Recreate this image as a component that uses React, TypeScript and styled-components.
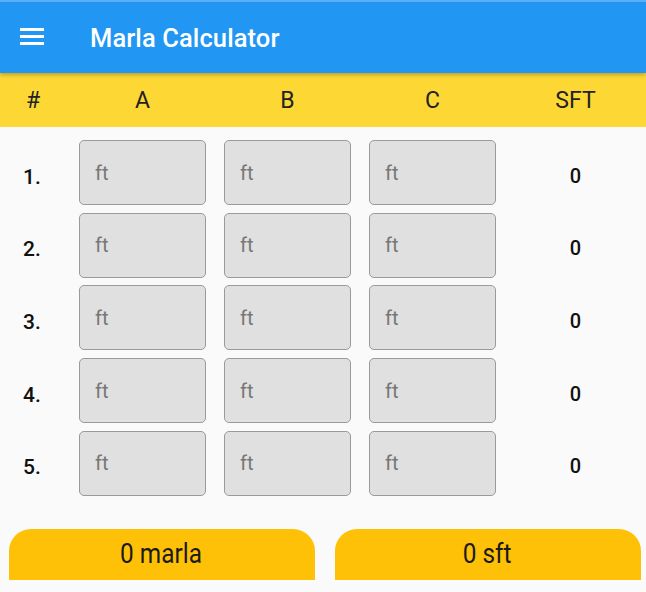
import styled, { createGlobalStyle } from 'styled-components';

const GlobalStyle = createGlobalStyle`
  html, body {
    margin: 0;
    padding: 0;
    background: #fafafa;
    font-family: Roboto, 'Noto Sans', sans-serif;
  }
`;

const Page = styled.div`
  width: 646px;
  height: 592px;
  display: flex;
  flex-direction: column;
  background: #fafafa;
  overflow: hidden;
`;

const AppBar = styled.header`
  height: 73px;
  background: #2196f3;
  border-top: 2px solid #5aaef5;
  box-sizing: border-box;
  display: flex;
  align-items: center;
  padding-left: 20px;
  position: relative;
  z-index: 1;
  box-shadow: 0 2px 4px rgba(0, 0, 0, 0.25);
`;

const MenuButton = styled.div`
  width: 24px;
  display: flex;
  flex-direction: column;
  gap: 4.5px;
  margin-top: -2px;
`;

const MenuLine = styled.span`
  height: 2.5px;
  background: #fff;
`;

const Title = styled.h1`
  margin: 0 0 0 46px;
  color: #fff;
  font-size: 25.5px;
  font-weight: 500;
  letter-spacing: 0.1px;
`;

const Grid = styled.div`
  display: grid;
  grid-template-columns: 70px 145px 145px 145px 1fr;
`;

const HeaderRow = styled(Grid)`
  height: 54px;
  background: #fdd835;
  align-items: center;
`;

const HeadCell = styled.div<{ $shift?: number }>`
  text-align: center;
  font-size: 23px;
  color: #222;
  margin-left: ${(p) => p.$shift ?? 0}px;
`;

const Rows = styled.div`
  display: flex;
  flex-direction: column;
  gap: 7.7px;
  padding-top: 13px;
`;

const Row = styled(Grid)`
  height: 65px;
  align-items: center;
`;

const RowLabel = styled.div`
  text-align: center;
  font-size: 21px;
  font-weight: 500;
  color: #111;
  padding-top: 8px;
  margin-left: -6px;
`;

const FieldCell = styled.div`
  padding: 0 9px;
  height: 100%;
`;

const Field = styled.input`
  box-sizing: border-box;
  width: 127px;
  height: 100%;
  background: #e0e0e0;
  border: 1.5px solid #9a9a9a;
  border-radius: 5px;
  padding: 0 0 0 15px;
  font-family: Roboto, sans-serif;
  font-size: 20px;
  color: #333;
  outline: none;

  &::placeholder {
    color: #777;
  }
`;

const Value = styled.div`
  text-align: center;
  font-size: 20px;
  font-weight: 500;
  color: #111;
  padding-top: 6px;
`;

const Footer = styled.div`
  margin-top: auto;
  display: flex;
  gap: 20px;
  padding: 0 5px 12px 9px;
`;

const Total = styled.div`
  flex: 1;
  height: 51px;
  background: #ffc107;
  border-radius: 22px 22px 0 0;
  display: flex;
  align-items: center;
  justify-content: center;
`;

const TotalText = styled.span`
  display: inline-block;
  font-size: 28px;
  color: #1a1a1a;
  transform: scaleX(0.87);
  margin: -2px 0 0 -2px;
`;

const rows = [1, 2, 3, 4, 5];

export default function App() {
  return (
    <Page>
      <GlobalStyle />
      <AppBar>
        <MenuButton>
          <MenuLine />
          <MenuLine />
          <MenuLine />
        </MenuButton>
        <Title>Marla Calculator</Title>
      </AppBar>

      <HeaderRow>
        <HeadCell $shift={-4}>#</HeadCell>
        <HeadCell>A</HeadCell>
        <HeadCell>B</HeadCell>
        <HeadCell>C</HeadCell>
        <HeadCell>SFT</HeadCell>
      </HeaderRow>

      <Rows>
        {rows.map((n) => (
          <Row key={n}>
            <RowLabel>{n}.</RowLabel>
            <FieldCell>
              <Field placeholder='ft' />
            </FieldCell>
            <FieldCell>
              <Field placeholder='ft' />
            </FieldCell>
            <FieldCell>
              <Field placeholder='ft' />
            </FieldCell>
            <Value>0</Value>
          </Row>
        ))}
      </Rows>

      <Footer>
        <Total>
          <TotalText>0 marla</TotalText>
        </Total>
        <Total>
          <TotalText>0 sft</TotalText>
        </Total>
      </Footer>
    </Page>
  );
}
